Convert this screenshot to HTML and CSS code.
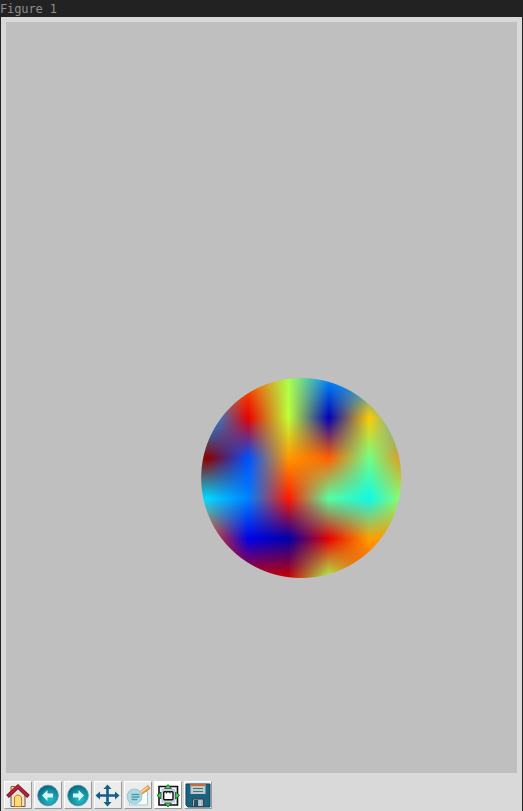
FILE: index.html
```
<!DOCTYPE html>
<html lang="en">
<head>
<meta charset="utf-8">
<title>Figure 1</title>
<link rel="stylesheet" href="styles.css">
</head>
<body>
<svg class="defs" aria-hidden="true"><defs><radialGradient id="teal" cx=".6" cy=".7" r=".75"><stop offset="0" stop-color="#25bcc8"/><stop offset=".6" stop-color="#118c9f"/><stop offset="1" stop-color="#075b76"/></radialGradient><g id="ball"><circle cx="13" cy="13.500" r="10.300" fill="url(#teal)" stroke="#4a8fa0" stroke-width=".8"/></g></defs></svg>
<div class="window">
  <header class="titlebar">Figure 1</header>
  <main class="content">
    <div class="figure"><canvas class="disc" id="disc" width="202" height="202"></canvas></div>
    <nav class="toolbar">
      <button class="tool" aria-label="Home"><svg viewBox="0 0 26 26"><path d="M6 4.500h4V11H6z" fill="#f0c890" stroke="#905a35"/><path d="M6 13l7-8 7 8v11.500H6z" fill="#e6e2d8" stroke="#75543a"/><path d="M9.500 24.500V15q3.500-4 7 0v9.500z" fill="#ffdb78" stroke="#c97a10"/><path d="M2.500 14.500L13 4.500l10.500 10" fill="none" stroke="#751323" stroke-width="3.800"/><path d="M3 14L13 4.500 23 14" fill="none" stroke="#b5233b" stroke-width="2.400"/></svg></button>
      <button class="tool" aria-label="Back"><svg viewBox="0 0 26 26"><use href="#ball"/><path d="M7 13.500L12.500 8v3.500H18v4h-5.500V19z" fill="#d5faf5"/></svg></button>
      <button class="tool" aria-label="Forward"><svg viewBox="0 0 26 26"><use href="#ball"/><path d="M19 13.500L13.500 8v3.500H8v4h5.500V19z" fill="#d5faf5"/></svg></button>
      <button class="tool" aria-label="Pan"><svg viewBox="0 0 26 26"><path d="M12.500 2.500l4 4.500h-2.700v5.200H20V9.500l4.500 4-4.500 4v-2.700h-6.200V20h2.700l-4 4.500-4-4.500h2.700v-5.200H5v2.700l-4.500-4 4.500-4v2.700h6.200V7H8.500z" fill="#146084"/></svg></button>
      <button class="tool" aria-label="Zoom"><svg viewBox="0 0 26 26"><path d="M4.500 9.500h18V23h-18z" fill="#fafcfc" stroke="#9ecbd1"/><path d="M14 10.500L23 3.500l2 3-8.500 6z" fill="#f0a24c" stroke="#c8803b" stroke-width=".8"/><path d="M15.500 10.500l7.500-5.500" stroke="#ffdcaa" stroke-width="1.500"/><circle cx="9.500" cy="14.500" r="7.300" fill="#b0dce1" stroke="#9ccdd6" stroke-width="1.200"/><path d="M6.500 12.500h8M6.500 15h8M6.500 17.500h6" stroke="#4b9db0" stroke-width="1.400"/></svg></button>
      <button class="tool tool-light" aria-label="Subplots"><svg viewBox="0 0 26 26"><path d="M4 4.500h18.500v18.500H4z" fill="#eef2fa" stroke="#111" stroke-width="1.600"/><path d="M6.500 7h13.500v13.500H6.500z" fill="#c1cde2"/><rect x="8.700" y="9.700" width="9.300" height="8" rx="1" fill="#fff" stroke="#111" stroke-width="1.400"/><path d="M11.500 9v2.500m3.500-2.500v2.500" stroke="#333"/><path d="M13 2.500L16.500 6.500h-7zM13 25l3.500-4h-7zM2 13.500L6 10v7zM24.500 13.500l-4-3.500v7z" fill="#3ed043" stroke="#173f1b" stroke-width=".7"/></svg></button>
      <button class="tool" aria-label="Save"><svg viewBox="0 0 26 26"><path d="M1 2h24v23H3l-2-2z" fill="#1c617e" stroke="#0c455f"/><path d="M5.500 2h15v10h-15z" fill="#bacbd0"/><path d="M5.500 2h15v2h-15z" fill="#c76b36"/><path d="M8 6.500h10M8 9.500h10" stroke="#4b7180"/><path d="M7.500 17h11v7.500h-11z" fill="#a5b4ba" stroke="#2b4350"/><path d="M9 18h4v6H9z" fill="#264f64"/><path d="M15 18v6" stroke="#d5dfe2"/></svg></button>
    </nav>
  </main>
</div>
<script src="plot.js"></script>
</body>
</html>
```
FILE: styles.css
```
* { box-sizing: border-box; }
body { margin: 0; overflow: hidden; background: #222; }
.window { height: 811px; display: flex; flex-direction: column; }
.titlebar {
  height: 17px;
  flex: none;
  background: #222;
  color: #8c8c8c;
  font: 12px/18px "DejaVu Sans Mono", monospace;
  letter-spacing: -0.1px;
}
.content {
  flex: 1;
  margin: 0 1px;
  padding: 5px 5px 0;
  background: #d9d9d9;
  display: flex;
  flex-direction: column;
}
.figure { height: 751px; flex: none; background: #bfbfbf; padding: 355px 0 0 194px; }
.disc { display: block; width: 202px; height: 202px; }
.toolbar { display: flex; gap: 2px; margin: 8px 0 0 -2px; }
.tool {
  width: 28px;
  height: 28px;
  padding: 0;
  border: 1px solid;
  border-color: #fff #999 #999 #fff;
  background: #ececec;
}
.tool-light { background: #fff; }
.tool svg { display: block; width: 26px; height: 26px; }
.defs { position: absolute; width: 0; height: 0; }
```
FILE: plot.js
```
// Colour samples on a regular grid, interpolated bilinearly inside a disc.
const grid = [
  ['ff7000', 'ff6000', 'a8ff50', '0090ff', '0090ff', '0090ff'],
  ['00a0ff', 'e80000', 'c0ff38', '0000b4', 'ffcc00', '20a0ff'],
  ['8b0000', '0050ff', 'ff9800', 'ff6000', '70ff88', 'ff8000'],
  ['00d8ff', '0080ff', 'ff1800', '58ffa0', '10f8e8', 'b0ff48'],
  ['ff4000', '0000e8', '0000a8', 'e80000', 'ffa000', 'ff9000'],
  ['d00000', 'c80000', 'd00000', 'a8ff50', 'ff4000', 'ff4000']
].map(row => row.map(c => [0, 2, 4].map(i => parseInt(c.slice(i, i + 2), 16))));
const ctx = document.getElementById('disc').getContext('2d');
const size = 202, step = 40.3;
const image = ctx.createImageData(size, size);
for (let y = 0; y < size; y++) {
  for (let x = 0; x < size; x++) {
    const u = Math.max(0, (x - 7.5) / step), v = Math.max(0, y / step);
    const i = Math.min(4, Math.floor(u)), j = Math.min(4, Math.floor(v));
    const a = u - i, b = v - j, p = (y * size + x) * 4;
    for (let k = 0; k < 3; k++) {
      const top = grid[j][i][k] * (1 - a) + grid[j][i + 1][k] * a;
      const bottom = grid[j + 1][i][k] * (1 - a) + grid[j + 1][i + 1][k] * a;
      image.data[p + k] = top * (1 - b) + bottom * b;
    }
    const edge = 100 - Math.hypot(x + .5 - 101.2, y + .5 - 101);
    image.data[p + 3] = 255 * Math.max(0, Math.min(1, edge + .5));
  }
}
ctx.putImageData(image, 0, 0);
```
